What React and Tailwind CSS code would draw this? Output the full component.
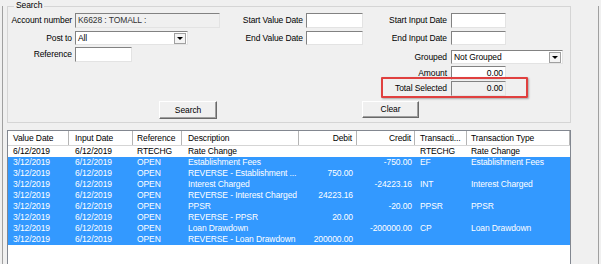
const columns = [
  { key: "vd", label: "Value Date", w: "w-[61px]", cell: "pl-[5px] text-left" },
  { key: "id", label: "Input Date", w: "w-[64px]", cell: "pl-[6px] text-left" },
  { key: "ref", label: "Reference", w: "w-[49px]", cell: "pl-[4px] text-left" },
  { key: "desc", label: "Description", w: "w-[117px]", cell: "pl-[6px] text-left" },
  { key: "debit", label: "Debit", w: "w-[58px]", cell: "pr-[4px] text-right" },
  { key: "credit", label: "Credit", w: "w-[58px]", cell: "pr-[3px] text-right" },
  { key: "code", label: "Transacti...", w: "w-[52px]", cell: "pl-[5px] text-left" },
  { key: "type", label: "Transaction Type", w: "flex-1", cell: "pl-[4px] text-left" },
];

const rows = [
  { vd: "6/12/2019", id: "6/12/2019", ref: "RTECHG", desc: "Rate Change", debit: "", credit: "", code: "RTECHG", type: "Rate Change", sel: false },
  { vd: "3/12/2019", id: "6/12/2019", ref: "OPEN", desc: "Establishment Fees", debit: "", credit: "-750.00", code: "EF", type: "Establishment Fees", sel: true },
  { vd: "3/12/2019", id: "6/12/2019", ref: "OPEN", desc: "REVERSE - Establishment ...", debit: "750.00", credit: "", code: "", type: "", sel: true },
  { vd: "3/12/2019", id: "6/12/2019", ref: "OPEN", desc: "Interest Charged", debit: "", credit: "-24223.16", code: "INT", type: "Interest Charged", sel: true },
  { vd: "3/12/2019", id: "6/12/2019", ref: "OPEN", desc: "REVERSE - Interest Charged", debit: "24223.16", credit: "", code: "", type: "", sel: true },
  { vd: "3/12/2019", id: "6/12/2019", ref: "OPEN", desc: "PPSR", debit: "", credit: "-20.00", code: "PPSR", type: "PPSR", sel: true },
  { vd: "3/12/2019", id: "6/12/2019", ref: "OPEN", desc: "REVERSE - PPSR", debit: "20.00", credit: "", code: "", type: "", sel: true },
  { vd: "3/12/2019", id: "6/12/2019", ref: "OPEN", desc: "Loan Drawdown", debit: "", credit: "-200000.00", code: "CP", type: "Loan Drawdown", sel: true },
  { vd: "3/12/2019", id: "6/12/2019", ref: "OPEN", desc: "REVERSE - Loan Drawdown", debit: "200000.00", credit: "", code: "", type: "", sel: true },
];

// sunken 3D edit box
const box =
  "border border-[#e3e3e3] border-t-[#828282] border-l-[#828282] flex items-center px-[2px] whitespace-nowrap overflow-hidden";

const btn =
  "flex items-center justify-center bg-[#f0f0f0] border border-white border-r-[#696969] border-b-[#696969] shadow-[inset_-1px_-1px_0_#a0a0a0]";

const Label = ({ w, children }) => (
  <span className={`${w} text-right shrink-0 whitespace-nowrap`}>{children}</span>
);

const Arrow = () => (
  <span className="ml-auto w-[12px] h-[11px] flex items-center justify-center border border-[#a0a0a0] bg-[#f4f4f4] shrink-0">
    <svg width="6" height="3" viewBox="0 0 6 3">
      <polygon points="0,0 6,0 3,3" fill="#000" />
    </svg>
  </span>
);

export default function App() {
  return (
    <div
      className="w-[601px] h-[264px] overflow-hidden bg-[#f0f0f0] px-[2px] text-[8.5px] tracking-[-0.1px] text-black leading-none"
      style={{ fontFamily: '"Liberation Sans", Arial, sans-serif' }}
    >
      <div className="h-full border-x border-[#a0a0a0] pl-[4px] pr-[26px]">
        {/* Search group */}
        <div className="relative mt-[6px] w-[564px] h-[117px] border border-[#d5d5d5] pt-[6px]">
          <span className="absolute left-[6px] top-[-6px] bg-[#f0f0f0] px-[2px]">Search</span>

          <div className="flex">
            {/* column 1 */}
            <div className="flex flex-col w-[212px]">
              <div className="flex items-center h-[15px] gap-[3px]">
                <Label w="w-[64px]">Account number</Label>
                <div className={`${box} w-[145px] h-full bg-[#f0f0f0] text-[#333]`}>K6628 : TOMALL :</div>
              </div>
              <div className="flex items-center h-[14px] mt-[3px] gap-[3px]">
                <Label w="w-[64px]">Post to</Label>
                <div className={`${box} w-[113px] h-full bg-white pr-[1px]`}>
                  <span>All</span>
                  <Arrow />
                </div>
              </div>
              <div className="flex items-center h-[15px] mt-[2px] gap-[3px]">
                <Label w="w-[64px]">Reference</Label>
                <div className={`${box} w-[57px] h-full bg-white`} />
              </div>
            </div>

            {/* column 2 */}
            <div className="flex flex-col w-[143px]">
              <div className="flex items-center h-[15px] gap-[3px]">
                <Label w="w-[83px]">Start Value Date</Label>
                <div className={`${box} w-[57px] h-full bg-white`} />
              </div>
              <div className="flex items-center h-[14px] mt-[3px] gap-[3px]">
                <Label w="w-[83px]">End Value Date</Label>
                <div className={`${box} w-[57px] h-full bg-white`} />
              </div>
            </div>

            {/* column 3 */}
            <div className="flex flex-col">
              <div className="flex items-center h-[15px] gap-[4px]">
                <Label w="w-[84px]">Start Input Date</Label>
                <div className={`${box} w-[55px] h-full bg-white`} />
              </div>
              <div className="flex items-center h-[14px] mt-[3px] gap-[4px]">
                <Label w="w-[84px]">End Input Date</Label>
                <div className={`${box} w-[55px] h-full bg-white`} />
              </div>
              <div className="flex items-center h-[14px] mt-[5px] gap-[4px]">
                <Label w="w-[84px]">Grouped</Label>
                <div className={`${box} w-[112px] h-full bg-white pr-[1px]`}>
                  <span>Not Grouped</span>
                  <Arrow />
                </div>
              </div>
              <div className="flex items-center h-[14px] mt-[2px] gap-[4px]">
                <Label w="w-[84px]">Amount</Label>
                <div className={`${box} w-[55px] h-full bg-white justify-end`}>0.00</div>
              </div>
              <div className="flex items-center h-[15px] mt-[1px] gap-[4px]">
                <Label w="w-[84px]">Total Selected</Label>
                <div className={`${box} w-[55px] h-full bg-[#f0f0f0] justify-end`}>0.00</div>
              </div>
            </div>
          </div>

          {/* buttons */}
          <div className="flex mt-[5px]">
            <button className={`${btn} ml-[151px] w-[58px] h-[18px]`}>Search</button>
            <button className={`${btn} ml-[145px] w-[57px] h-[17px]`}>Clear</button>
          </div>

          {/* highlight annotation */}
          <div className="absolute left-[373px] top-[70px] w-[147px] h-[21px] border-2 border-[#e0403f] rounded-[1px] shadow-[1px_1px_2px_rgba(0,0,0,0.3)]" />
        </div>

        {/* transaction list */}
        <div className="mt-[7px] w-[564px] h-[200px] border border-[#828790] bg-white">
          <div className="flex h-[15px] border-b border-[#d5d5d5] bg-white">
            {columns.map((c) => (
              <div
                key={c.key}
                className={`${c.w} ${c.cell} h-full flex items-center border-r border-[#b5b5b5] whitespace-nowrap overflow-hidden ${
                  c.cell.includes("text-right") ? "justify-end" : ""
                }`}
              >
                {c.label}
              </div>
            ))}
          </div>
          {rows.map((r, i) => (
            <div
              key={i}
              className={`flex h-[11px] items-center ${r.sel ? "bg-[#3399ff] text-white" : "bg-white text-black"}`}
            >
              {columns.map((c) => (
                <div key={c.key} className={`${c.w} ${c.cell} whitespace-nowrap overflow-hidden`}>
                  {r[c.key]}
                </div>
              ))}
            </div>
          ))}
        </div>
      </div>
    </div>
  );
}
